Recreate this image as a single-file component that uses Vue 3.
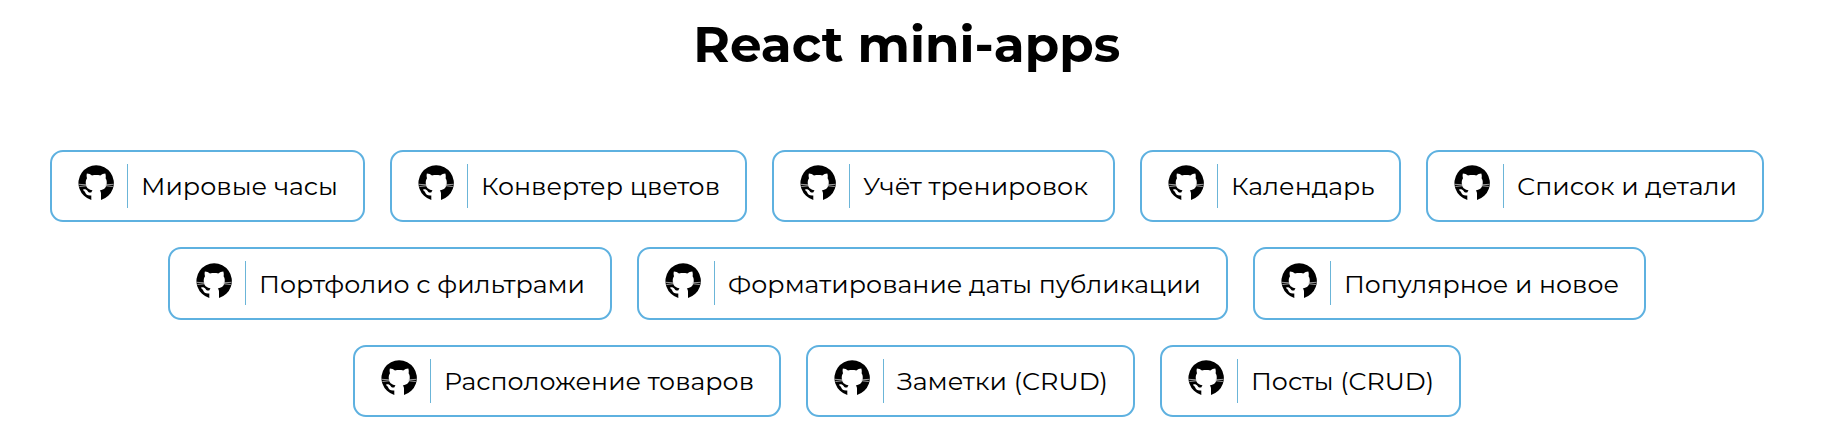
<script setup>
const rows = [
  [
    { title: 'Мировые часы', width: 197 },
    { title: 'Конвертер цветов', width: 239 },
    { title: 'Учёт тренировок', width: 225 },
    { title: 'Календарь', width: 143.5 },
    { title: 'Список и детали', width: 220 }
  ],
  [
    { title: 'Портфолио с фильтрами', width: 326 },
    { title: 'Форматирование даты публикации', width: 473 },
    { title: 'Популярное и новое', width: 275 }
  ],
  [
    { title: 'Расположение товаров', width: 310 },
    { title: 'Заметки (CRUD)', width: 211 },
    { title: 'Посты (CRUD)', width: 183 }
  ]
]
</script>

<template>
  <main class="page">
    <h1 class="heading">
      <svg width="427" height="68" aria-label="React mini-apps">
        <text x="-.8" y="48" textLength="427" lengthAdjust="spacingAndGlyphs">React mini-apps</text>
      </svg>
    </h1>
    <div class="rows">
      <div v-for="(row, i) in rows" :key="i" class="row">
        <a v-for="app in row" :key="app.title" class="card">
          <svg class="logo" viewBox="0 0 36 36">
            <path d="M13.300 34.900A17.700 17.700 0 1 1 23 34.900Z" />
            <path class="cat" d="M8.900 8.500c1.800.1 3.700.9 5.100 1.900 2.700-.5 5.600-.5 8.300 0 1.400-1 3.200-1.800 5-1.900.6 1.600.6 3.300.3 4.800 1.100 1.500 1.300 3.100 1.100 5.200-.3 3.900-2.400 6.200-6.900 6.900.9.900 1.200 2 1.200 3.300V36h-9.700v-5.500c-3.800.5-5.200-1.200-6.100-3-.5-1-1.300-1.800-2.300-2.400.2-1.300 3.500-1.300 4.700.9 1 1.700 2.200 1.900 3.900 1.300.1-.8.500-1.500 1-2-4.200-.6-6.400-2.700-6.700-6.700-.2-2.100.100-3.900 1.200-5.400-.4-1.500-.6-3.200-.1-4.700Z" />
            <path class="whiskers" d="M.8 19.300l8.400.6M1.400 21.500l8-.8M35.400 19.300l-8.400.6M34.800 21.500l-8-.8" />
          </svg>
          <span class="divider"></span>
          <svg class="label" :width="app.width" height="40">
            <text x="0" y="27" :textLength="app.width" lengthAdjust="spacingAndGlyphs">{{ app.title }}</text>
          </svg>
        </a>
      </div>
    </div>
  </main>
</template>

<style>
body {
  background: #fff;
}
</style>

<style scoped>
.page {
  width: 1814px;
  height: 442px;
  padding-top: 14px;
  box-sizing: border-box;
  font-family: Montserrat, Inter, sans-serif;
  color: #000;
}
.heading {
  display: flex;
  justify-content: center;
  height: 68px;
  margin: 0 0 67.9px;
  font-size: 50px;
  font-weight: 700;
}
.heading svg {
  overflow: visible;
}
.rows {
  display: grid;
  gap: 25px;
}
.row {
  display: flex;
  justify-content: center;
  gap: 25px;
}
.card {
  display: flex;
  align-items: flex-start;
  box-sizing: border-box;
  height: 72.4px;
  padding: 12px 25px 0 26px;
  border: 2px solid #5eb1e0;
  border-radius: 13px;
  font-size: 25px;
}
.logo {
  width: 36px;
  height: 36px;
  margin-top: 1.3px;
}
.cat {
  fill: #fff;
}
.whiskers {
  fill: none;
  stroke: #ddd;
  stroke-width: 0.7;
}
.divider {
  width: 1px;
  height: 44px;
  margin: 0 13px;
  background: #6bb5d8;
}
.label {
  margin-top: 4.3px;
  overflow: visible;
}
</style>
